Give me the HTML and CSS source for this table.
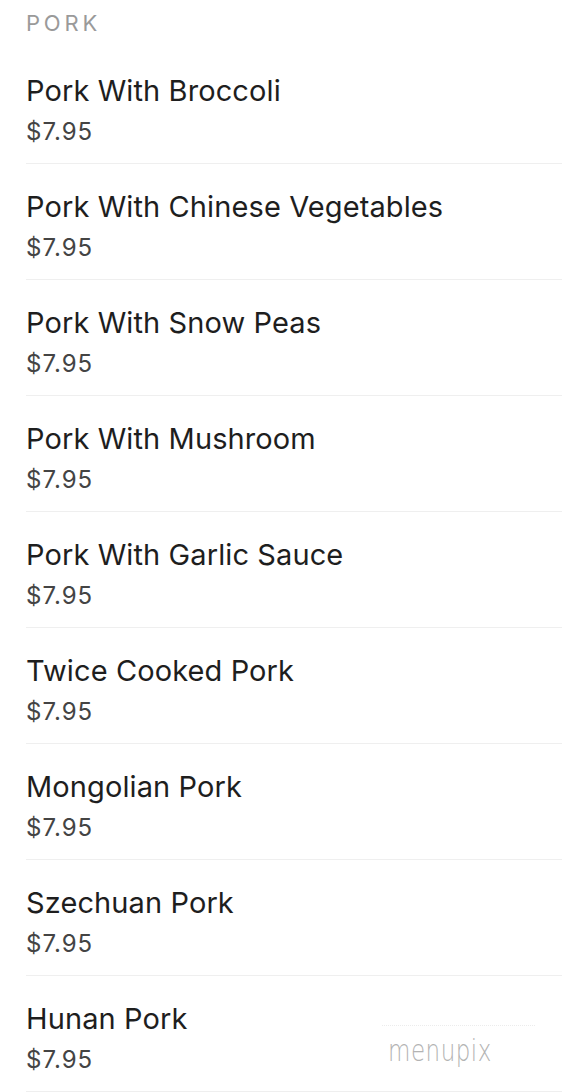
FILE: index.html
```html
<!DOCTYPE html>
<html>
<head>
<meta charset="utf-8">
<link rel="stylesheet" href="styles.css">
</head>
<body>
<section class="menu-section">
  <h2 class="section-title">PORK</h2>
  <ul class="items">
    <li class="item"><div class="item-name">Pork With Broccoli</div><div class="item-price">$7.95</div></li>
    <li class="item"><div class="item-name">Pork With Chinese Vegetables</div><div class="item-price">$7.95</div></li>
    <li class="item"><div class="item-name">Pork With Snow Peas</div><div class="item-price">$7.95</div></li>
    <li class="item"><div class="item-name">Pork With Mushroom</div><div class="item-price">$7.95</div></li>
    <li class="item"><div class="item-name">Pork With Garlic Sauce</div><div class="item-price">$7.95</div></li>
    <li class="item"><div class="item-name">Twice Cooked Pork</div><div class="item-price">$7.95</div></li>
    <li class="item"><div class="item-name">Mongolian Pork</div><div class="item-price">$7.95</div></li>
    <li class="item"><div class="item-name">Szechuan Pork</div><div class="item-price">$7.95</div></li>
    <li class="item"><div class="item-name">Hunan Pork</div><div class="item-price">$7.95</div></li>
  </ul>
</section>
<div class="watermark"><span class="watermark-text">menupix</span></div>
</body>
</html>
```

FILE: styles.css
```css
html, body {
  margin: 0;
  padding: 0;
  background: #ffffff;
}
body {
  font-family: Inter, "Open Sans", sans-serif;
  color: #222;
  width: 562px;
  height: 1092px;
  overflow: hidden;
  position: relative;
}
.menu-section {
  padding-left: 26px;
}
.section-title {
  margin: 0;
  padding-top: 8px;
  font-size: 22px;
  line-height: 30px;
  font-weight: 400;
  letter-spacing: 3.8px;
  color: #9a9a9a;
}
.items {
  list-style: none;
  margin: 10px 0 0 0;
  padding: 0;
}
.item {
  padding: 23px 0 16px 0;
  border-bottom: 1px solid #efefef;
}
.item-name {
  font-size: 29px;
  line-height: 40px;
  letter-spacing: 0.1px;
  color: #1e1e1e;
}
.item-price {
  margin-top: 6px;
  font-size: 24px;
  line-height: 30px;
  letter-spacing: 1px;
  color: #444;
}
.watermark {
  position: absolute;
  left: 382px;
  top: 1025px;
  width: 147px;
  height: 50px;
  padding: 8px 0 0 6px;
  border-top: 1px dotted #ececec;
}
.watermark-text {
  display: inline-block;
  font-family: "DejaVu Sans", sans-serif;
  font-weight: 200;
  font-size: 23px;
  letter-spacing: 0.5px;
  color: #b3b3b3;
  transform: scaleY(1.3);
  transform-origin: left top;
}
```
